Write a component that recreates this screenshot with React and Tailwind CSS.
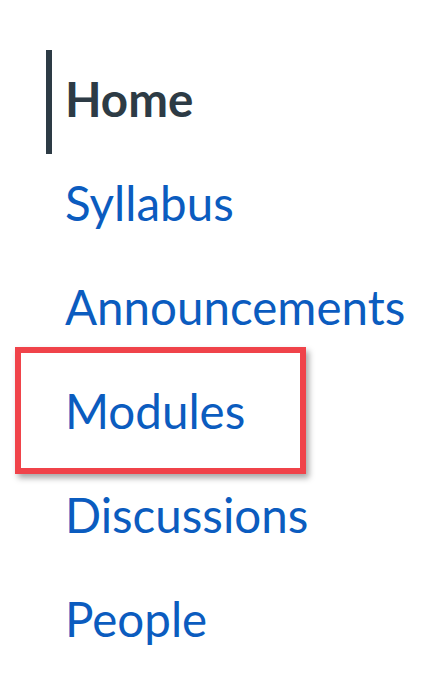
const items = [
  { label: "Home", active: true },
  { label: "Syllabus" },
  { label: "Announcements" },
  { label: "Modules", highlight: true },
  { label: "Discussions" },
  { label: "People" },
];

export default function App() {
  return (
    <div className="min-h-[684px] w-[436px] bg-white pl-[46px] pt-[50px] font-['Lato','Liberation_Sans',sans-serif]">
      <ul className="flex flex-col">
        {items.map((item) => (
          <li
            key={item.label}
            className={`relative h-[104px] border-l-[6px] pl-[13px] pt-[21px] text-[47.5px] leading-[56px] ${
              item.active
                ? "border-[#2d3b45] font-bold text-[#2d3b45]"
                : "border-transparent text-[#0b5cbf]"
            }`}
          >
            <a href="#">{item.label}</a>
            {item.highlight && (
              <div className="pointer-events-none absolute left-[-37px] top-[-15px] h-[127px] w-[291px] border-[6px] border-[#f0434a] shadow-[3px_4px_6px_rgba(0,0,0,0.35)]" />
            )}
          </li>
        ))}
      </ul>
    </div>
  );
}
